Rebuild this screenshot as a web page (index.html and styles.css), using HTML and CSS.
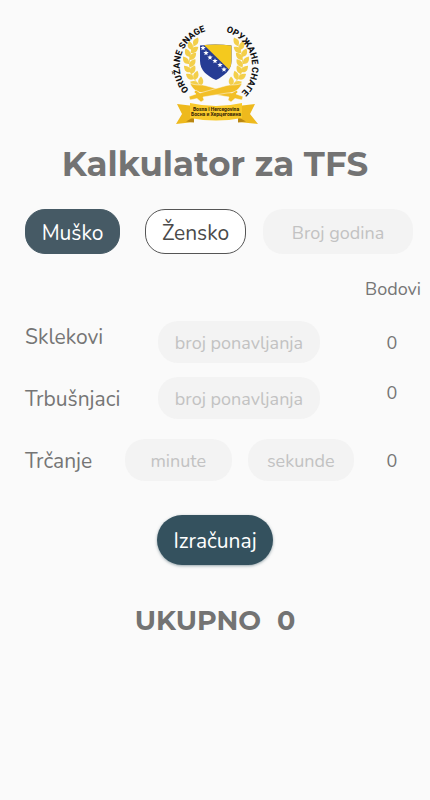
FILE: index.html
```html
<!DOCTYPE html>
<html lang="bs">
<head>
<meta charset="utf-8">
<meta name="viewport" content="width=device-width, initial-scale=1">
<title>Kalkulator za TFS</title>
<link rel="stylesheet" href="styles.css">
</head>
<body>
<main class="page">
  <svg class="emblem" viewBox="0 0 110 120" role="img" aria-label="Oružane snage Bosne i Hercegovine">
    <defs>
      <path id="arc-left" d="M29 75A36 36 0 0 1 59 15"/>
      <path id="arc-right" d="M66 17A36 36 0 0 1 72 84"/>
      <path id="leaf" d="M0 0C-4 -3 -3.600 -6 0 -9.500C3 -6 3 -3 0 0Z"/>
      <g id="branch">
        <path d="M48 74C30 70 22 44 38 24" fill="none" stroke="#f3cf4a" stroke-width=".8"/>
        <use href="#leaf" transform="translate(34 31) rotate(25)"/>
        <use href="#leaf" transform="translate(32 35) rotate(-18)"/>
        <use href="#leaf" transform="translate(31 38) rotate(50)"/>
        <use href="#leaf" transform="translate(30 42) rotate(-28)"/>
        <use href="#leaf" transform="translate(30 45) rotate(40)"/>
        <use href="#leaf" transform="translate(29 49) rotate(-38)"/>
        <use href="#leaf" transform="translate(30 52) rotate(35)"/>
        <use href="#leaf" transform="translate(31 57) rotate(-48)"/>
        <use href="#leaf" transform="translate(31 59) rotate(25)"/>
        <use href="#leaf" transform="translate(34 64) rotate(-58)"/>
        <use href="#leaf" transform="translate(35 65) rotate(15)"/>
        <use href="#leaf" transform="translate(39 70) rotate(-70)"/>
        <use href="#leaf" transform="translate(41 71) rotate(0)"/>
      </g>
      <path id="star" d="M0 -2.800L.7 -.9L2.700 -.9L1.100 .4L1.700 2.300L0 1.200L-1.700 2.300L-1.100 .4L-2.700 -.9L-.7 -.9Z"/>
      <path id="sword" d="M30 68C35 71 41 69 47 71L72 78L76 75L78 77L76 79L83 81.500L82 85L75 83.500L71 87L68 85L69 82L45 78C37 78 32 74 30 68Z"/>
    </defs>
    <g fill="#f3cf4a">
      <use href="#branch"/>
      <use href="#branch" transform="matrix(-1 0 0 1 112 0)"/>
    </g>
    <path d="M40 30.500Q55 28.500 71.500 30.500V46C71.500 55 64 61 56 65C47 61 40 55 40 46Z" fill="#263c94"/>
    <path d="M44 30Q57 28.700 71.500 30.500V46Q71.500 51 69 54.500Z" fill="#f4c91e"/>
    <g fill="#fff">
      <use href="#star" x="43" y="33"/>
      <use href="#star" x="46" y="38"/>
      <use href="#star" x="50" y="42.500"/>
      <use href="#star" x="55" y="46"/>
      <use href="#star" x="60" y="50"/>
      <use href="#star" x="64" y="54.500"/>
    </g>
    <g fill="#f2bf27" stroke="#fafafa" stroke-width=".5">
      <use href="#sword"/>
      <use href="#sword" transform="matrix(-1 0 0 1 112 0)"/>
    </g>
    <path d="M17 89L34 91V107L16 109L22 99ZM95 89L78 91V107L98 109L90 99Z" fill="#eeb91d"/>
    <path d="M26 106.500L34 102V107.500ZM86 106.500L78 102V107.500Z" fill="#b98612"/>
    <path d="M30 88Q56 94 82 88V103Q56 108 30 103Z" fill="#f8c92b"/>
    <g class="emblem-motto">
      <text x="56" y="96">Bosna i Hercegovina</text>
      <text x="56" y="101">Босна и Херцеговина</text>
    </g>
    <g class="emblem-ring">
      <text><textPath href="#arc-left">ORUŽANE SNAGE</textPath></text>
      <text><textPath href="#arc-right">ОРУЖАНЕ СНАГЕ</textPath></text>
    </g>
  </svg>

  <h1 class="title">Kalkulator za TFS</h1>

  <form class="form">
    <div class="profile">
      <button class="pill selected" type="button">Muško</button>
      <button class="pill outlined" type="button">Žensko</button>
      <input class="field age" type="text" inputmode="numeric" placeholder="Broj godina" aria-label="Broj godina">
    </div>

    <p class="points-heading">Bodovi</p>

    <div class="row first">
      <label class="name" for="pushups">Sklekovi</label>
      <input class="field reps" id="pushups" type="text" inputmode="numeric" placeholder="broj ponavljanja">
      <output class="points" for="pushups">0</output>
    </div>
    <div class="row second">
      <label class="name" for="situps">Trbušnjaci</label>
      <input class="field reps" id="situps" type="text" inputmode="numeric" placeholder="broj ponavljanja">
      <output class="points" for="situps">0</output>
    </div>
    <div class="row">
      <label class="name" for="minutes">Trčanje</label>
      <div class="time">
        <input class="field" id="minutes" type="text" inputmode="numeric" placeholder="minute">
        <input class="field" id="seconds" type="text" inputmode="numeric" placeholder="sekunde" aria-label="Trčanje, sekunde">
      </div>
      <output class="points" for="minutes seconds">0</output>
    </div>

    <button class="submit" type="button">Izračunaj</button>
  </form>

  <p class="total"><span>UKUPNO</span><output>0</output></p>
</main>
</body>
</html>
```

FILE: styles.css
```css
* {
  box-sizing: border-box;
}

body {
  margin: 0;
  background: #fafafa;
  color: #757575;
  font-family: Nunito, "Open Sans", "Noto Sans", sans-serif;
  font-size: 21px;
  font-weight: 400;
}

button,
input {
  font: inherit;
}

.page {
  display: flex;
  flex-direction: column;
  align-items: center;
  padding-top: 15px;
}

.emblem {
  width: 110px;
  height: 120px;
}

.emblem-ring {
  fill: #111;
  font: 800 9px Roboto, sans-serif;
}

.emblem-motto {
  fill: #332405;
  font: 700 5px Roboto, sans-serif;
  text-anchor: middle;
}

.title,
.total {
  margin: 0;
  color: #737373;
  font-family: Montserrat, Inter, sans-serif;
  font-weight: 700;
}

.title {
  margin-top: 9px;
  font-size: 34px;
  line-height: 40px;
}

.form {
  display: flex;
  flex-direction: column;
  width: 100%;
  margin-top: 25px;
}

.profile {
  display: flex;
  padding: 0 17px 0 25px;
}

.pill {
  height: 45px;
  padding: 2px 0 0;
  border: 1px solid #465a65;
  border-radius: 20px;
}

.selected {
  width: 95px;
  margin-right: 25px;
  background: #465a65;
  color: #fff;
}

.outlined {
  width: 101px;
  margin-right: 17px;
  border-color: #555;
  background: #fff;
  color: #4a4a4a;
}

.field {
  min-width: 0;
  height: 42px;
  padding: 2px 0 0;
  border: 0;
  border-radius: 20px;
  background: #f3f3f3;
  color: #6d6d6d;
  font-size: 18px;
  text-align: center;
}

.field::placeholder {
  color: #c2c2c2;
  opacity: 1;
}

.age {
  flex: 1;
  height: 45px;
}

.points-heading {
  margin: 23px 9px 19px;
  font-size: 18px;
  line-height: 25px;
  text-align: right;
}

.row {
  display: grid;
  grid-template-columns: 100px 1fr 76px;
  align-items: center;
  min-height: 42px;
  padding-left: 25px;
}

.first {
  margin-bottom: 14px;
}

.first .name {
  padding-bottom: 12px;
}

.second {
  margin-bottom: 20px;
}

.second .points {
  padding-bottom: 12px;
}

.name {
  padding-top: 2px;
  line-height: 28px;
}

.reps {
  width: 162px;
  margin-left: 33px;
}

.time {
  display: grid;
  grid-template-columns: 1fr 1fr;
  gap: 16px;
}

.points {
  padding-top: 2px;
  font-size: 18px;
  line-height: 24px;
  text-align: center;
}

.submit {
  align-self: center;
  width: 116px;
  height: 50px;
  margin-top: 34px;
  padding: 2px 0 0;
  border: 0;
  border-radius: 25px;
  background: #34515e;
  box-shadow: 0 1px 3px #34515e80;
  color: #fff;
}

.total {
  display: flex;
  gap: 16px;
  margin-top: 38px;
  font-size: 27px;
  line-height: 36px;
}
```
